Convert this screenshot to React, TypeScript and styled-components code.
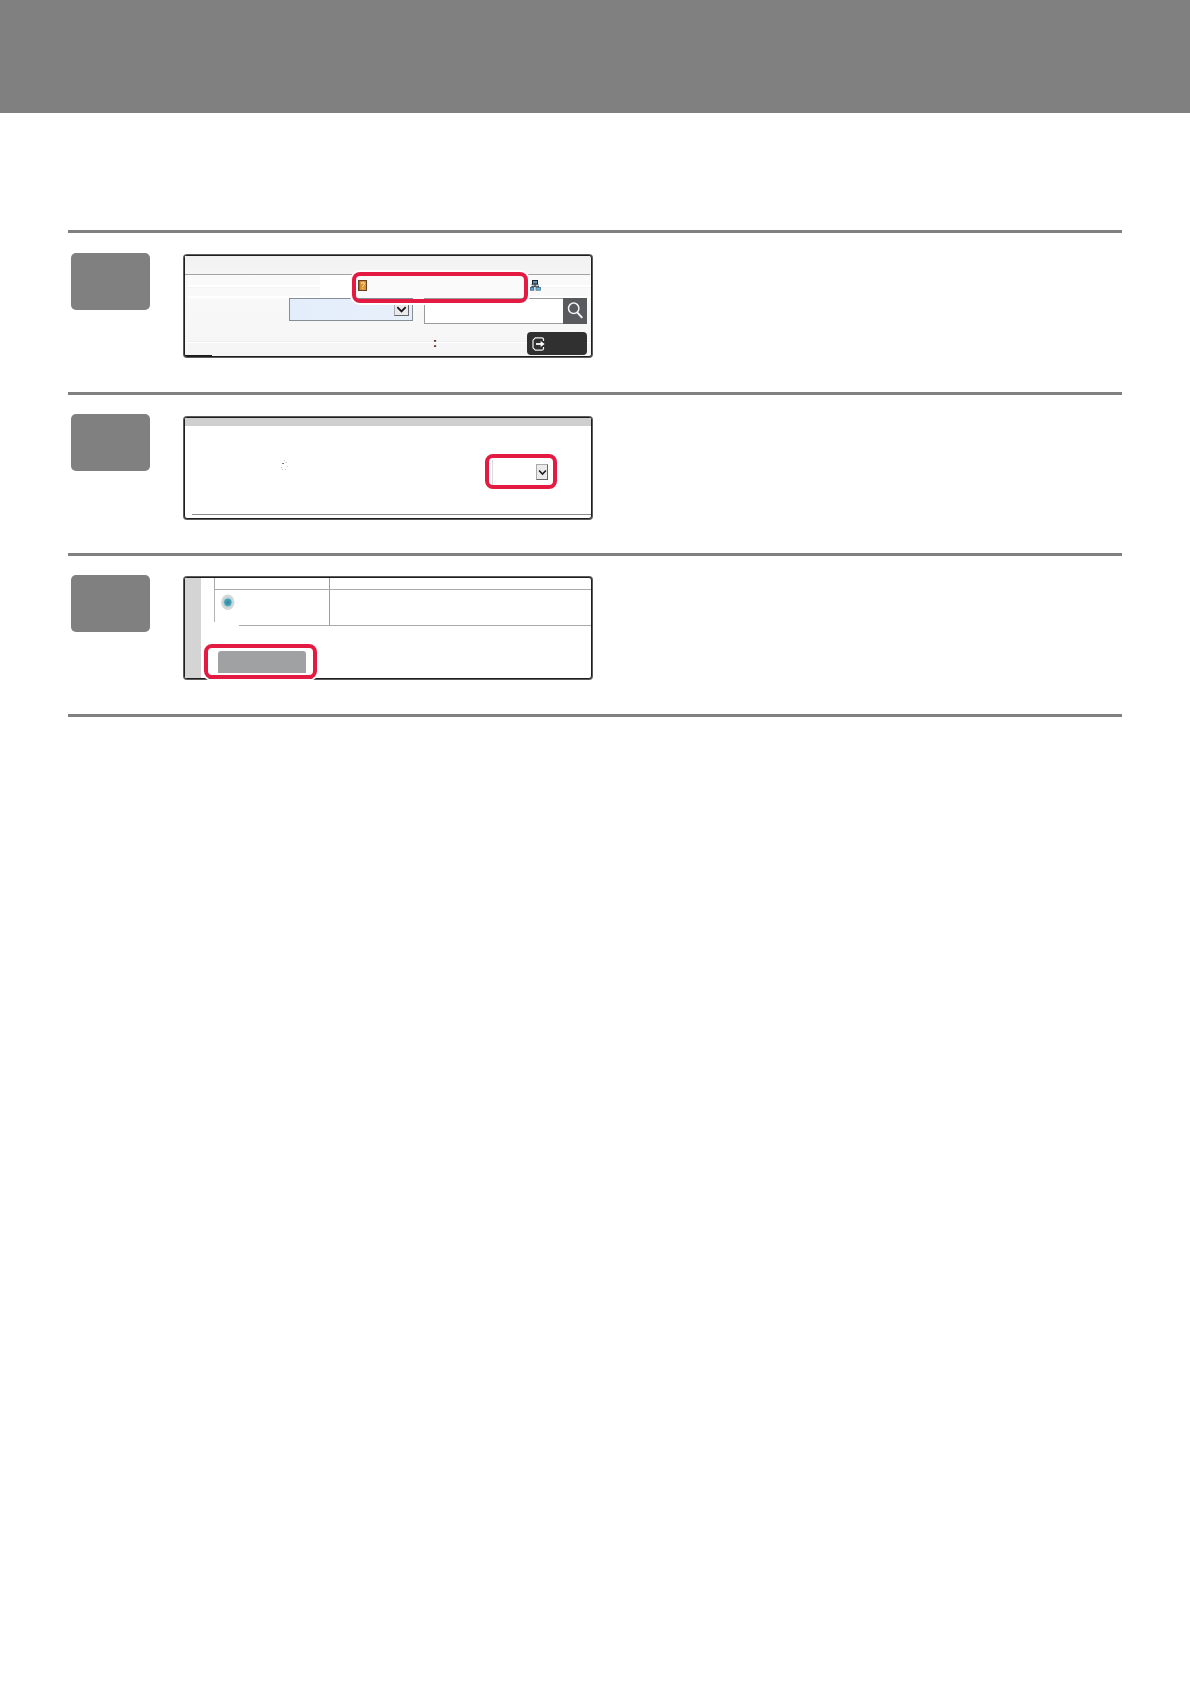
import React from "react";
import styled, { createGlobalStyle } from "styled-components";

const GlobalStyle = createGlobalStyle`
  * { box-sizing: border-box; }
  body { margin: 0; background: #fff; font-family: "Liberation Sans", Arial, sans-serif; }
`;

const Page = styled.div`
  min-height: 1684px;
  background: #fff;
`;

const Header = styled.header`
  height: 113px;
  background: #808080;
`;

const Steps = styled.main`
  width: 1054px;
  margin: 117px 0 0 68px;
  border-bottom: 3px solid #808080;
`;

const Step = styled.section<{ $height: number; $badgeTop: number }>`
  display: flex;
  align-items: flex-start;
  gap: 34px;
  height: ${(p) => p.$height}px;
  padding: ${(p) => p.$badgeTop}px 0 0 3px;
  border-top: 3px solid #808080;
`;

const Badge = styled.div`
  width: 79px;
  height: 57px;
  border-radius: 5px;
  background: #808080;
`;

const Frame = styled.div<{ $top: number; $bg?: string }>`
  position: relative;
  display: flex;
  flex-direction: column;
  width: 408px;
  height: 102px;
  margin-top: ${(p) => p.$top}px;
  border: 1px solid #1e1e1e;
  border-radius: 3px;
  box-shadow: 0 0 0 1px #5c5c5c;
  background: ${(p) => p.$bg || "#fff"};
`;

const Highlight = styled.div<{ $x: number; $y: number; $w: number; $h: number }>`
  position: absolute;
  left: ${(p) => p.$x}px;
  top: ${(p) => p.$y}px;
  width: ${(p) => p.$w}px;
  height: ${(p) => p.$h}px;
  border: 4px solid #e31b43;
  border-radius: 8px;
  box-shadow: 0 0 0 2px #fff;
`;

/* Address book screen */
const TitleBar = styled.div`
  height: 19px;
  margin-right: 1px;
  border-bottom: 1px solid #a2a2a2;
  background: linear-gradient(#f1f1f1, #f5f5f5);
`;

const Body = styled.div`
  flex: 1;
  display: flex;
  flex-direction: column;
  margin-left: 3px;
  background: linear-gradient(#fafafa, #f5f5f5);
`;

const LinkRow = styled.div`
  display: flex;
  align-items: flex-start;
  height: 23px;
  background: linear-gradient(
    transparent 10px, #fff 10px, #fff 12px, #f4f4f4 12px, #f4f4f4 13px,
    transparent 13px, transparent 21px, #fff 21px
  );
`;

const LinkGap = styled.div`
  width: 32px;
  height: 21px;
  margin-left: 132px;
  background: #fff;
`;

const HighlightFill = styled.div`
  width: 178px;
  height: 23px;
  padding: 5px 0 0 6px;
  background: #fafafa;
`;

const NetworkCell = styled.div`
  padding: 5px 0 0 0;
  svg { display: block; }
`;

const FieldRow = styled.div`
  display: flex;
  align-items: flex-start;
  height: 34px;
  padding-left: 101px;
`;

const Select = styled.div`
  display: flex;
  align-items: flex-end;
  justify-content: flex-end;
  width: 124px;
  height: 23px;
  padding: 0 3px 4px 0;
  border: 1px solid #858d97;
  background: linear-gradient(90deg, #e4edfb, #e7effa);
`;

const DropButton = styled.div<{ $w: number; $h: number }>`
  display: flex;
  align-items: center;
  justify-content: center;
  width: ${(p) => p.$w}px;
  height: ${(p) => p.$h}px;
  border: 1px solid #aaa;
  border-right-color: #666;
  border-bottom-color: #666;
  background: #eaeaea;
`;

const SearchField = styled.div`
  display: flex;
  justify-content: flex-end;
  width: 163px;
  height: 26px;
  margin-left: 11px;
  border: 1px solid #9b9b9b;
  border-right: 0;
  background: #fff;
`;

const SearchButton = styled.div`
  display: flex;
  width: 24px;
  height: 26px;
  margin-top: -1px;
  background: #585a5e;
`;

const ActionRow = styled.div`
  display: flex;
  align-items: flex-start;
  flex: 1;
  background: linear-gradient(
    transparent 9px, #f0f0f0 9px, #f0f0f0 10px, #fff 10px, #fff 11px, transparent 11px
  );
`;

const Colon = styled.span`
  width: 91px;
  margin-left: 245px;
  padding-top: 4px;
  font-size: 12px;
  font-weight: 700;
  line-height: 14px;
  color: #222;
`;

const ExitButton = styled.div`
  display: flex;
  align-items: center;
  width: 60px;
  height: 23px;
  margin: 0 0 0 3px;
  padding-left: 5px;
  border-radius: 4px;
  background: #303031;
`;

const FrameMark = styled.div`
  width: 27px;
  height: 1px;
  background: #1c1c1c;
`;

/* Display count screen */
const TopStrip = styled.div`
  height: 8px;
  background: #cfcfcf;
`;

const CountRow = styled.div`
  display: flex;
  align-items: flex-start;
  height: 89px;
  margin-left: 7px;
  padding: 33px 0 0 89px;
  border-bottom: 1px solid #8c8c8c;
`;

const CountSelect = styled.div`
  display: flex;
  justify-content: flex-end;
  width: 57px;
  height: 26px;
  margin: 1px 0 0 203px;
  padding: 4px 1px 0 0;
  border-left: 1px solid #dadada;
`;

/* Selection table screen */
const Split = styled.div`
  display: flex;
  height: 100px;
`;

const SideStrip = styled.div`
  width: 16px;
  background: #d4d4d4;
`;

const TableArea = styled.div`
  flex: 1;
  padding-left: 13px;
`;

const TableHead = styled.div`
  display: grid;
  grid-template-columns: 114px 1fr;
  height: 12px;
  border-left: 1px solid #aaa;
  border-bottom: 1px solid #aaa;
`;

const TableRow = styled.div`
  display: grid;
  grid-template-columns: 25px 90px 1fr;
  height: 36px;
`;

const RadioCell = styled.div`
  height: 32px;
  padding: 4px 0 0 5px;
  border-left: 1px solid #b5b5b5;
`;

const Cell = styled.div<{ $left?: boolean; $bottom?: boolean }>`
  border-left: ${(p) => (p.$left ? "1px solid #9d9d9d" : "0")};
  border-bottom: ${(p) => (p.$bottom ? "1px solid #aaa" : "0")};
`;

const SubmitButton = styled.div`
  width: 88px;
  height: 22px;
  margin: 25px 0 0 3.5px;
  border-radius: 3px 3px 0 0;
  background: #a0a1a3;
`;

const Chevron = ({ size }: { size: number }) => (
  <svg width={size} height={size} viewBox="0 0 10 10">
    <path d="M1.2 2.8 5 6.8 8.8 2.8" fill="none" stroke="#1d1820" strokeWidth="1.7" />
  </svg>
);

const BookIcon = () => (
  <svg width="9" height="11" viewBox="0 0 9 11" style={{ display: "block" }}>
    <rect x=".5" y=".5" width="8" height="10" fill="#dc922f" stroke="#654128" />
    <path d="M1.6 1v9" stroke="#a95e19" />
    <path d="M3.5 4V2.8h2.7v2L4.8 6v1.3M4.8 8.2v1" fill="none" stroke="#ffe4ad" />
  </svg>
);

const NetworkIcon = () => (
  <svg width="11" height="11" viewBox="0 0 11 11">
    <path d="M5 4v3M2 8V6.2h6.5V8" fill="none" stroke="#263744" strokeWidth="1.1" />
    <rect x="2.5" y=".5" width="5" height="3.5" fill="#648eae" stroke="#172532" />
    <path d="M1.5 4.5h7" stroke="#364956" strokeWidth=".7" />
    <rect x=".4" y="7.4" width="3.4" height="2.8" fill="#5ba9d3" stroke="#405e73" strokeWidth=".8" />
    <rect x="6" y="7.4" width="4.4" height="2.8" fill="#69badf" stroke="#456e88" strokeWidth=".8" />
  </svg>
);

const SearchIcon = () => (
  <svg width="24" height="26" viewBox="0 0 24 26">
    <circle cx="10.7" cy="10.3" r="5.2" fill="none" stroke="#f5f5f5" strokeWidth="1.5" />
    <path d="m14.2 14.3 5.1 5.6" stroke="#f5f5f5" strokeWidth="2" />
  </svg>
);

const ExitIcon = () => (
  <svg width="14" height="14" viewBox="0 0 14 14">
    <path d="M11.5 4V2.6Q11.5.8 9.7.8H3.4L1 3.2v7.6l2.4 2.4h6.3q1.8 0 1.8-1.8V10" fill="none" stroke="#f0f0f0" strokeWidth="1.2" />
    <path d="M4 7h6" stroke="#fff" strokeWidth="1.8" />
    <path d="M8.6 4 12.7 7l-4.1 3Z" fill="#fff" />
  </svg>
);

const FaintMark = () => (
  <svg width="8" height="12" viewBox="0 0 8 12">
    <path d="M1 4.5h2" stroke="#777" />
    <path d="M3 1.5h1M5 3.5h1M5.5 7.5h1M4 10.5h1M1 10.5h1M0 8.5h1" stroke="#c8c8c8" />
  </svg>
);

const Radio = () => (
  <svg width="15" height="17" viewBox="0 0 15 17">
    <ellipse cx="7.8" cy="8.3" rx="6.7" ry="7.8" fill="#d6d8d8" />
    <ellipse cx="7.8" cy="8.3" rx="4.6" ry="5.3" fill="#a9d0d8" />
    <circle cx="7.8" cy="8.3" r="3.6" fill="#3ba0b4" />
    <circle cx="7.8" cy="8.3" r="1.6" fill="#4583a5" />
  </svg>
);

export default function App() {
  return (
    <>
      <GlobalStyle />
      <Page>
        <Header />
        <Steps>
          <Step $height={162} $badgeTop={20}>
            <Badge />
            <Frame $top={2} $bg="#f7f7f7">
              <TitleBar />
              <Body>
                <LinkRow>
                  <LinkGap />
                  <HighlightFill><BookIcon /></HighlightFill>
                  <NetworkCell><NetworkIcon /></NetworkCell>
                </LinkRow>
                <FieldRow>
                  <Select><DropButton $w={15} $h={13}><Chevron size={11} /></DropButton></Select>
                  <SearchField><SearchButton><SearchIcon /></SearchButton></SearchField>
                </FieldRow>
                <ActionRow>
                  <Colon>:</Colon>
                  <ExitButton><ExitIcon /></ExitButton>
                </ActionRow>
              </Body>
              <FrameMark />
              <Highlight $x={167} $y={16} $w={176} $h={31} />
            </Frame>
          </Step>
          <Step $height={161} $badgeTop={19}>
            <Badge />
            <Frame $top={3}>
              <TopStrip />
              <CountRow>
                <FaintMark />
                <CountSelect><DropButton $w={12} $h={16}><Chevron size={9} /></DropButton></CountSelect>
              </CountRow>
              <Highlight $x={300} $y={36} $w={72} $h={35} />
            </Frame>
          </Step>
          <Step $height={161} $badgeTop={19}>
            <Badge />
            <Frame $top={2}>
              <Split>
                <SideStrip />
                <TableArea>
                  <TableHead><Cell /><Cell $left /></TableHead>
                  <TableRow>
                    <RadioCell><Radio /></RadioCell>
                    <Cell $bottom />
                    <Cell $left $bottom />
                  </TableRow>
                  <SubmitButton />
                </TableArea>
              </Split>
              <Highlight $x={19} $y={66} $w={113} $h={35} />
            </Frame>
          </Step>
        </Steps>
      </Page>
    </>
  );
}
